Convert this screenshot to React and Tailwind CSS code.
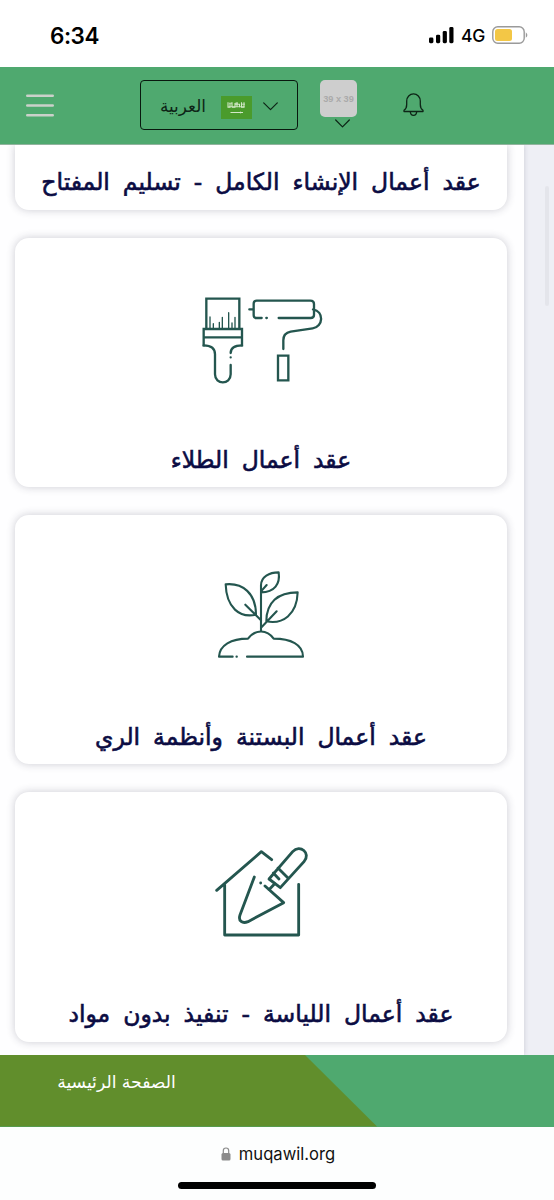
import React from "react";

const INK = "#24564f";

function StatusBar() {
  return (
    <div className="flex h-[67px] shrink-0 items-start bg-white pl-[50px] pr-[26px] pt-[22px] font-['Inter','Liberation_Sans',sans-serif]">
      <span className="text-[22.5px] font-semibold leading-[27px] tracking-[-0.5px] text-black">6:34</span>
      <svg className="ml-auto mt-[5px]" width="25" height="17" viewBox="0 0 25 17" fill="#000">
        <rect x="0" y="10.5" width="4.4" height="5.7" rx="1.4" />
        <rect x="7" y="7.7" width="4.2" height="8.5" rx="1.4" />
        <rect x="13.7" y="4" width="4.2" height="12.2" rx="1.4" />
        <rect x="20.3" y="0" width="4.2" height="16.2" rx="1.4" />
      </svg>
      <span className="ml-[7px] text-[17.5px] font-medium leading-[28px] tracking-[-0.3px] text-black">4G</span>
      <svg className="ml-[7px] mt-[4px]" width="36" height="18" viewBox="0 0 36 18">
        <rect x="0.8" y="0.8" width="31.4" height="16.4" rx="5" fill="none" stroke="#9a9a9a" strokeWidth="1.4" />
        <rect x="3" y="3" width="17" height="12" rx="2.5" fill="#f3c746" />
        <path d="M33.8 6.2q3.2 2.8 0 5.6z" fill="#9a9a9a" />
      </svg>
    </div>
  );
}

function Header() {
  return (
    <header className="flex h-[78px] shrink-0 items-start border-b border-[#91b39e] bg-[#4fa96f]">
      <svg className="ml-[26px] mt-[27px]" width="28" height="24" viewBox="0 0 28 24" stroke="#cbd1ca" strokeWidth="2.4" strokeLinecap="round">
        <path d="M1.200 1.700h25.600M1.200 11.500h25.600M1.200 21.300h25.600" />
      </svg>
      <div className="ml-[86px] mt-[13px] flex h-[50px] w-[158px] items-center rounded-[4px] border-[1.5px] border-[#08180e] pl-[19px]">
        <span dir="rtl" className="flex w-[46px] justify-center whitespace-nowrap pt-[2px] font-['DejaVu_Sans',sans-serif] text-[16.800px] leading-[28px] text-[#0d2416]">العربية</span>
        <svg className="ml-[15px] mt-[4px]" width="31" height="23" viewBox="0 0 31 23">
          <rect width="31" height="23" fill="#4a9b2c" />
          <g stroke="#d3e8c9" fill="none">
            <path d="M7 6.3v5h2v-4m2 4V6.3m0 5h3V7m2 4.3V6.3m-1.5 2h4v3m2-5v5h2.500v-5" strokeWidth="1.1" />
            <path d="M7.500 10.700h16M8 7.200h3m3 0h3m3 1h4" strokeWidth=".8" />
            <path d="M9.500 16.500H22m-2.500-.8v1.600" strokeWidth="1" />
          </g>
        </svg>
        <svg className="ml-[11px] mt-[2px]" width="15" height="9" viewBox="0 0 15 9" fill="none" stroke="#0d2416" strokeWidth="1.2" strokeLinecap="round" strokeLinejoin="round">
          <path d="M.7.9 7.500 7.700 14.300.9" />
        </svg>
      </div>
      <div className="ml-[22px] mt-[13px] flex w-[37px] flex-col items-center">
        <div className="flex h-[37px] w-[37px] items-center justify-center rounded-[5px] bg-[#cecece] pt-[2px] font-['Liberation_Sans',sans-serif] text-[9.200px] font-bold leading-none text-[#aaa]">
          <span className="whitespace-nowrap">39 x 39</span>
        </div>
        <svg className="ml-[8px] mt-[2px]" width="15" height="9" viewBox="0 0 15 9" fill="none" stroke="#0d2416" strokeWidth="1.2" strokeLinecap="round" strokeLinejoin="round">
          <path d="M.7 1 7.500 7.800 14.300 1" />
        </svg>
      </div>
      <svg className="ml-[46px] mt-[25px]" width="21" height="25" viewBox="0 0 21 25" fill="none" stroke="#0d2416" strokeWidth="1.3" strokeLinejoin="round">
        <path d="M1 19.500h19v-1.200c-2-1.300-2.700-3-2.700-5.800V9c0-4-3-7.100-6.800-7.100S3.700 5 3.700 9v3.500c0 2.800-.7 4.500-2.700 5.800z" />
        <path d="M7.300 19.700c.2 2.300 1.400 3.600 3.200 3.600s3-1.300 3.200-3.600" />
      </svg>
    </header>
  );
}

function PaintIcon() {
  return (
    <svg className="mt-[1.400px]" width="142" height="110" viewBox="0 0 426 330" fill="none" stroke={INK} strokeWidth="7" strokeLinecap="round">
      <path strokeLinecap="square" d="M49 132V41h99v91M41 132h115v49M41 132v49M41 157h115" />
      <path d="M41 181c21 0 34 9 34 27v60c0 32 47 32 47 0v-28M156 181c-22 0-34 9-34 23M122 217v.1" />
      <path strokeWidth="4" d="M60 131V96M70 131v-15M88 131v-19M97 131V97M116 131V83M126 131v-17M135 131V97" />
      <path d="M178 73h12M215 99h-16q-8 0-8-8V56q0-9 9-9h161q11 0 11 10v33q0 9-10 9h-96M229 99h1.500M369 73c34 6 31 53-1 57l-66 10c-16 3-22 14-22 26v26" />
      <path strokeLinecap="square" d="M264 212h31v74h-31z" />
    </svg>
  );
}

function PlantIcon() {
  return (
    <svg className="mt-[-0.600px]" width="112" height="110" viewBox="0 0 336 330" fill="none" stroke={INK} strokeWidth="6.300" strokeLinecap="round" strokeLinejoin="round">
      <path d="M168 213V76c0-26 25-39 53-39 5 34-12 60-53 60M168 94l17-19" />
      <path d="M62 73c51-5 91 27 91 91-49 11-89-21-91-91zM121 134l47 47" />
      <path d="M278 97c-60 0-94 30-94 87 49 10 92-20 94-87zM215 154l-47 49" />
      <path d="M83 290H42c2-34 36-54 87-54 22-29 57-28 77 0 51 0 88 18 88 54H126M94.500 290h1" />
    </svg>
  );
}

function TrowelIcon() {
  return (
    <svg className="mt-[-3.500px]" width="112" height="115" viewBox="0 0 336 345" fill="none" stroke={INK} strokeWidth="8.500" strokeLinecap="round" strokeLinejoin="round">
      <path d="M35 166 169 50l31 24M59 149v151h222V148" />
      <path d="m148 126-43 114c-6 18 7 27 24 20l107-57-56-50M167 144v.1M192 164l17-18" />
      <path d="m192 132 71-82c22-24 56 5 34 30l-71 78zM219 99l30 30M205 114l17 18" />
    </svg>
  );
}

function Title({ children }) {
  return (
    <div dir="rtl" className="flex justify-center whitespace-nowrap font-['DejaVu_Sans',sans-serif] text-[23.500px] leading-[32px] text-[#0b0c43] [-webkit-text-stroke:0.600px_#0b0c43] [word-spacing:5.500px]">
      <h2>{children}</h2>
    </div>
  );
}

function Card({ icon, children }) {
  return (
    <article className="flex h-[249.500px] shrink-0 flex-col items-center rounded-[14px] bg-white pt-[46px] shadow-[0_0_8px_rgba(40,40,65,0.24)]">
      <div className="flex h-[160px] items-start">{icon}</div>
      {children}
    </article>
  );
}

function Footer() {
  return (
    <footer className="flex h-[71.500px] shrink-0 bg-[#4fa96f]">
      <div className="h-full w-[377px] bg-[#618e2c] pl-[57px] pt-[13px] [clip-path:polygon(0_0,305px_0,377px_100%,0_100%)]">
        <span dir="rtl" className="flex w-[119px] justify-center whitespace-nowrap font-['DejaVu_Sans',sans-serif] text-[17.200px] leading-[28px] text-white">الصفحة الرئيسية</span>
      </div>
    </footer>
  );
}

export default function App() {
  return (
    <div className="flex h-[1200px] w-[554px] flex-col overflow-hidden bg-white">
      <StatusBar />
      <Header />
      <main className="flex h-[910px] shrink-0 overflow-hidden bg-[#eeeff5]">
        <div className="flex w-[524px] shrink-0 flex-col gap-[27.800px] bg-[#fefeff] pl-[15px] pr-[17px] shadow-[0_0_5px_rgba(40,40,65,0.18)]">
          <article className="h-[64.800px] shrink-0 rounded-b-[14px] bg-white pt-[21px] shadow-[0_0_8px_rgba(40,40,65,0.24)]">
            <Title>عقد أعمال الإنشاء الكامل - تسليم المفتاح</Title>
          </article>
          <Card icon={<PaintIcon />}>
            <Title>عقد أعمال الطلاء</Title>
          </Card>
          <Card icon={<PlantIcon />}>
            <Title>عقد أعمال البستنة وأنظمة الري</Title>
          </Card>
          <Card icon={<TrowelIcon />}>
            <Title>عقد أعمال اللياسة - تنفيذ بدون مواد</Title>
          </Card>
        </div>
        <div className="ml-[21px] mt-[41px] h-[120px] w-[4px] rounded-full bg-[#e4e5eb]" />
      </main>
      <Footer />
      <div className="flex flex-1 flex-col items-center bg-[#fdfefe] pt-[13px]">
        <div className="flex h-[28px] items-center gap-[8px]">
          <svg className="ml-[2px]" width="10" height="14" viewBox="0 0 10 14">
            <path d="M2.300 6.500V3.700a2.700 2.700 0 0 1 5.400 0v2.800" fill="none" stroke="#8b8b8b" strokeWidth="1.200" />
            <rect x=".5" y="6" width="9" height="7.500" rx="1.500" fill="#8b8b8b" />
          </svg>
          <span className="font-['Inter','Liberation_Sans',sans-serif] text-[16.600px] leading-[28px] text-[#111]">muqawil.org</span>
        </div>
        <div className="mt-[14px] h-[7px] w-[198px] rounded-full bg-black" />
      </div>
    </div>
  );
}
